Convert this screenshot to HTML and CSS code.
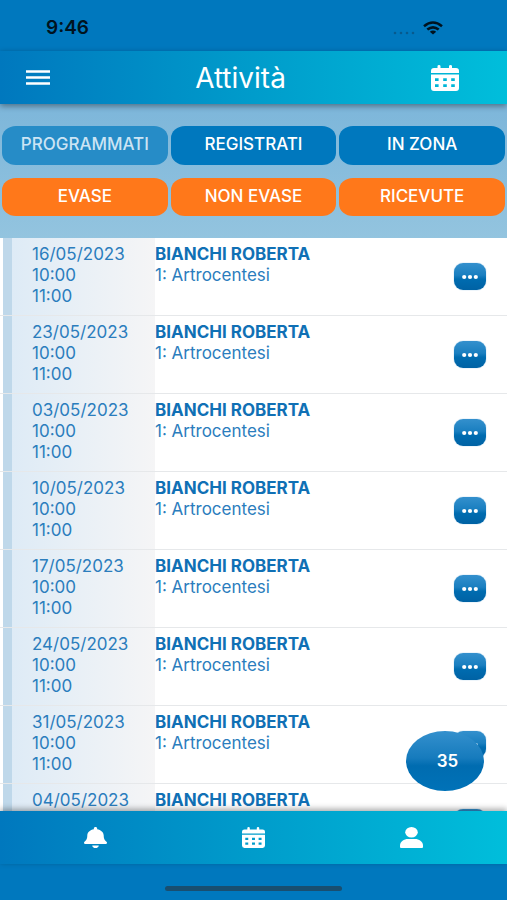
FILE: index.html
```html
<!DOCTYPE html>
<html lang="it">
<head>
<meta charset="utf-8">
<meta name="viewport" content="width=device-width, initial-scale=1">
<title>Attività</title>
<link rel="stylesheet" href="styles.css">
</head>
<body>
<svg class="sprite" aria-hidden="true">
  <symbol id="calendar" viewBox="0 0 28 26" preserveAspectRatio="none">
    <path fill-rule="evenodd" d="M0 8V6Q0 3 3 3H6.500V1.300Q6.500 0 8 0T9.500 1.300V3H18V1.300Q18 0 19.500 0T21 1.300V3H25Q28 3 28 6V8zM0 9.500H28V23Q28 26 25 26H3Q0 26 0 23zM4 13.200v2.800h3.600v-2.800zM12.200 13.200v2.800h3.600v-2.800zM20.200 13.200v2.800h3.600v-2.800zM4 19.200v2.800h3.600v-2.800zM12.200 19.200v2.800h3.600v-2.800zM20.200 19.200v2.800h3.600v-2.800z"/>
  </symbol>
  <symbol id="bell" viewBox="0 0 448 512" preserveAspectRatio="none">
    <path d="M224 512c35.320 0 63.970-28.650 63.970-64H160.030c0 35.350 28.650 64 63.970 64zm215.390-149.710c-19.320-20.760-55.470-51.990-55.470-154.290 0-77.700-54.480-139.900-127.940-155.160V32c0-17.670-14.320-32-31.980-32s-31.980 14.330-31.980 32v20.840C118.560 68.100 64.080 130.300 64.080 208c0 102.300-36.150 133.530-55.470 154.290-6 6.450-8.660 14.160-8.610 21.710.11 16.400 12.980 32 32.100 32h383.800c19.120 0 32-15.600 32.100-32 .05-7.550-2.610-15.270-8.610-21.710z"/>
  </symbol>
  <symbol id="user" viewBox="0 0 22 21" preserveAspectRatio="none">
    <ellipse cx="11" cy="5.300" rx="6" ry="5.300"/>
    <path d="M0 20V18.500C0 14.500 4 12 7.500 12h7c3.500 0 7.500 2.500 7.500 6.500V20q0 1-1 1H1q-1 0-1-1z"/>
  </symbol>
  <symbol id="dots" viewBox="0 0 16 4">
    <ellipse cx="2.200" cy="2" rx="2.100" ry="1.900"/>
    <ellipse cx="8" cy="2" rx="2.100" ry="1.900"/>
    <ellipse cx="13.800" cy="2" rx="2.100" ry="1.900"/>
  </symbol>
</svg>

<div class="statusbar">
  <span class="clock">9:46</span>
  <span class="signals">
    <svg class="cell" viewBox="0 0 22 4" aria-hidden="true"><circle cx="2" cy="2" r="1.300"/><circle cx="8" cy="2" r="1.300"/><circle cx="14" cy="2" r="1.300"/><circle cx="20" cy="2" r="1.300"/></svg>
    <svg class="wifi" viewBox="0 0 20 14" aria-hidden="true">
      <path d="M1 5.200Q10-2.200 19 5.200M4.300 8.600Q10 4 15.700 8.600" fill="none" stroke="#00131f" stroke-width="2.600"/>
      <path d="M6.800 10.800Q10 8.200 13.200 10.800L10 13.600z" fill="#00131f"/>
    </svg>
  </span>
</div>

<header class="appbar">
  <button class="icon-button" aria-label="Menu"><svg class="menu-icon" viewBox="0 0 24 15"><path d="M0 1.500h24M0 7.500h24M0 13.500h24" stroke="#fff" stroke-width="2.400"/></svg></button>
  <h1 class="title">Attività</h1>
  <button class="icon-button" aria-label="Calendario"><svg class="appbar-calendar"><use href="#calendar"/></svg></button>
</header>

<section class="filters">
  <button class="filter selected">PROGRAMMATI</button>
  <button class="filter">REGISTRATI</button>
  <button class="filter">IN ZONA</button>
  <button class="filter state">EVASE</button>
  <button class="filter state">NON EVASE</button>
  <button class="filter state">RICEVUTE</button>
</section>

<main class="content">
  <ul class="activities">
    <li class="activity"><div class="when">16/05/2023<br>10:00<br>11:00</div><div class="what"><strong>BIANCHI ROBERTA</strong><br>1: Artrocentesi</div><button class="more" aria-label="Altro"><svg class="dots"><use href="#dots"/></svg></button></li>
    <li class="activity"><div class="when">23/05/2023<br>10:00<br>11:00</div><div class="what"><strong>BIANCHI ROBERTA</strong><br>1: Artrocentesi</div><button class="more" aria-label="Altro"><svg class="dots"><use href="#dots"/></svg></button></li>
    <li class="activity"><div class="when">03/05/2023<br>10:00<br>11:00</div><div class="what"><strong>BIANCHI ROBERTA</strong><br>1: Artrocentesi</div><button class="more" aria-label="Altro"><svg class="dots"><use href="#dots"/></svg></button></li>
    <li class="activity"><div class="when">10/05/2023<br>10:00<br>11:00</div><div class="what"><strong>BIANCHI ROBERTA</strong><br>1: Artrocentesi</div><button class="more" aria-label="Altro"><svg class="dots"><use href="#dots"/></svg></button></li>
    <li class="activity"><div class="when">17/05/2023<br>10:00<br>11:00</div><div class="what"><strong>BIANCHI ROBERTA</strong><br>1: Artrocentesi</div><button class="more" aria-label="Altro"><svg class="dots"><use href="#dots"/></svg></button></li>
    <li class="activity"><div class="when">24/05/2023<br>10:00<br>11:00</div><div class="what"><strong>BIANCHI ROBERTA</strong><br>1: Artrocentesi</div><button class="more" aria-label="Altro"><svg class="dots"><use href="#dots"/></svg></button></li>
    <li class="activity"><div class="when">31/05/2023<br>10:00<br>11:00</div><div class="what"><strong>BIANCHI ROBERTA</strong><br>1: Artrocentesi</div><button class="more" aria-label="Altro"><svg class="dots"><use href="#dots"/></svg></button></li>
    <li class="activity"><div class="when">04/05/2023</div><div class="what"><strong>BIANCHI ROBERTA</strong></div><button class="more" aria-label="Altro"></button></li>
  </ul>
  <button class="count">35</button>
</main>

<nav class="tabs">
  <a class="tab" href="#notifiche" aria-label="Notifiche"><svg class="tab-icon"><use href="#bell"/></svg></a>
  <a class="tab" href="#attivita" aria-label="Attività"><svg class="tab-icon"><use href="#calendar"/></svg></a>
  <a class="tab" href="#profilo" aria-label="Profilo"><svg class="tab-icon"><use href="#user"/></svg></a>
</nav>
<footer class="home"><div class="home-bar"></div></footer>
</body>
</html>
```
FILE: styles.css
```css
* {
  box-sizing: border-box;
}

body {
  margin: 0;
  height: 100vh;
  display: flex;
  flex-direction: column;
  background: #0078be;
  color: #1473b9;
  font-family: Inter, Roboto, sans-serif;
  font-size: 17px;
  line-height: 21px;
}

button {
  border: 0;
  padding: 0;
  font: inherit;
  color: #fff;
  cursor: pointer;
}

svg {
  display: block;
  fill: #fff;
}

.sprite {
  position: absolute;
  width: 0;
  height: 0;
}

.statusbar {
  flex: none;
  height: 51px;
  padding: 4px 64px 0 46px;
  display: flex;
  align-items: center;
  justify-content: space-between;
}

.clock {
  color: #00131f;
  font-size: 19px;
  font-weight: 600;
}

.signals {
  display: flex;
  align-items: flex-end;
  gap: 8px;
}

.cell {
  width: 22px;
  height: 4px;
  fill: #075a8e;
}

.wifi {
  width: 20px;
  height: 14px;
}

.appbar,
.tabs {
  flex: none;
  height: 53px;
  background: linear-gradient(90deg, #0078be, #009ccb 50%, #00bedb);
}

.appbar {
  position: relative;
  z-index: 1;
  padding: 0 48px 0 26px;
  display: flex;
  align-items: center;
  justify-content: space-between;
  box-shadow: 0 2px 6px rgba(0, 0, 0, 0.4);
}

.icon-button {
  background: none;
}

.menu-icon {
  width: 24px;
  height: 15px;
}

.appbar-calendar {
  width: 28px;
  height: 26px;
}

.title {
  margin: 0;
  color: #fff;
  font-size: 28px;
  font-weight: 400;
  line-height: 32px;
}

.filters {
  flex: none;
  padding: 22px 2px;
  display: grid;
  grid-template-columns: repeat(3, 1fr);
  gap: 13px 3px;
  background: linear-gradient(#7db6da, #93c4df);
}

.filter {
  height: 39px;
  padding-bottom: 2px;
  border-radius: 14px / 12px;
  background: #0078be;
  font-weight: 500;
}

.filter.selected {
  background: #268cc7;
  color: #cce4f4;
}

.filter.state {
  height: 38px;
  background: #ff781a;
}

.content {
  position: relative;
  flex: 1;
  min-height: 0;
  background: #fff;
}

.activities {
  height: 100%;
  margin: 0;
  padding: 0;
  overflow: hidden;
  list-style: none;
}

.activity {
  height: 78px;
  padding: 0 21px 0 3px;
  display: grid;
  grid-template-columns: 152px 1fr 32px;
  border-bottom: 1px solid #e6e8ea;
}

.when {
  padding: 6px 0 8px 20px;
  border-left: 9px solid #bfd8ea;
  background: linear-gradient(90deg, #deebf6, #f5f5f6);
  color: #2b7dbd;
}

.what {
  padding-top: 6px;
  color: #2b7dbd;
}

.what strong {
  color: #1070b5;
  font-weight: 700;
}

.more {
  align-self: center;
  width: 32px;
  height: 27px;
  border-radius: 9px;
  background: linear-gradient(#3490cd, #1a7fc0 45%, #006cb0 60%, #0062a4);
  box-shadow: 0 0 1px #4c9bd0;
}

.dots {
  width: 16px;
  height: 4px;
  margin: 0 auto;
}

.count {
  position: absolute;
  right: 23px;
  bottom: 20px;
  width: 78px;
  height: 60px;
  padding-left: 5px;
  border-radius: 50%;
  background: linear-gradient(#3490cd, #167bbd 45%, #006cb0 58%, #0072b8);
  font-weight: 600;
}

.tabs {
  position: relative;
  z-index: 1;
  padding: 0 16px;
  display: grid;
  grid-template-columns: repeat(3, 1fr);
  box-shadow: 0 -2px 6px rgba(0, 0, 0, 0.35);
}

.tab {
  display: grid;
  place-items: center;
}

.tab-icon {
  width: 23px;
  height: 21px;
}

.home {
  flex: none;
  height: 36px;
  padding-top: 22px;
}

.home-bar {
  width: 35%;
  height: 5px;
  margin: 0 auto;
  border-radius: 3px;
  background: #194e70;
}
```
